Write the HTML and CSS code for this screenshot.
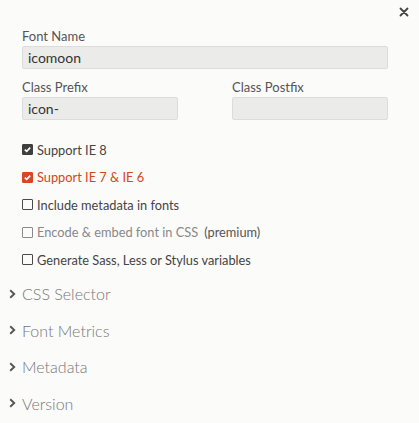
FILE: index.html
```html
<!DOCTYPE html>
<html>
<head>
<meta charset="utf-8">
<link rel="stylesheet" href="styles.css">
</head>
<body>
<div class="panel">
  <button class="close" aria-label="Close">
    <svg width="10" height="10" viewBox="0 0 10 10"><path d="M1.5 1.5L8.5 8.5M8.5 1.5L1.5 8.5" stroke="#444" stroke-width="1.8" stroke-linecap="round"/></svg>
  </button>
  <div class="field">
    <label class="label">Font Name</label>
    <div class="input">icomoon</div>
  </div>
  <div class="row">
    <div class="field half">
      <label class="label">Class Prefix</label>
      <div class="input">icon-</div>
    </div>
    <div class="field half">
      <label class="label">Class Postfix</label>
      <div class="input"></div>
    </div>
  </div>
  <ul class="checks">
    <li class="check on"><span class="box"><svg width="9" height="9" viewBox="0 0 9 9"><path d="M1.8 4.6L3.7 6.4L7.2 2.6" fill="none" stroke="#fff" stroke-width="1.6"/></svg></span>Support IE 8</li>
    <li class="check red"><span class="box"><svg width="9" height="9" viewBox="0 0 9 9"><path d="M1.8 4.6L3.7 6.4L7.2 2.6" fill="none" stroke="#fff" stroke-width="1.6"/></svg></span>Support IE 7 &amp; IE 6</li>
    <li class="check"><span class="box"></span>Include metadata in fonts</li>
    <li class="check dim"><span class="box"></span>Encode &amp; embed font in CSS<span class="prem">(premium)</span></li>
    <li class="check"><span class="box"></span>Generate Sass, Less or Stylus variables</li>
  </ul>
  <div class="sections">
    <div class="section"><span class="chev"><svg width="7" height="10" viewBox="0 0 7 10"><path d="M1.2 1.2L5.2 5L1.2 8.8" fill="none" stroke="#555" stroke-width="1.9"/></svg></span>CSS Selector</div>
    <div class="section"><span class="chev"><svg width="7" height="10" viewBox="0 0 7 10"><path d="M1.2 1.2L5.2 5L1.2 8.8" fill="none" stroke="#555" stroke-width="1.9"/></svg></span>Font Metrics</div>
    <div class="section"><span class="chev"><svg width="7" height="10" viewBox="0 0 7 10"><path d="M1.2 1.2L5.2 5L1.2 8.8" fill="none" stroke="#555" stroke-width="1.9"/></svg></span>Metadata</div>
    <div class="section"><span class="chev"><svg width="7" height="10" viewBox="0 0 7 10"><path d="M1.2 1.2L5.2 5L1.2 8.8" fill="none" stroke="#555" stroke-width="1.9"/></svg></span>Version</div>
  </div>
</div>
</body>
</html>
```
FILE: styles.css
```css
html, body {
  margin: 0;
  padding: 0;
  background: #fbfbfa;
}
body {
  font-family: Lato, "Noto Sans", sans-serif;
  color: #555;
}
.panel {
  position: relative;
  width: 419px;
  height: 423px;
  padding: 27px 31px 0 22px;
  box-sizing: border-box;
}
.close {
  position: absolute;
  top: 7px;
  right: 10px;
  width: 10px;
  height: 10px;
  padding: 0;
  border: 0;
  background: none;
  display: flex;
}
.field {
  display: flex;
  flex-direction: column;
}
.label {
  font-size: 13px;
  line-height: 18px;
  color: #555;
  margin-bottom: 1px;
}
.input {
  height: 23px;
  box-sizing: border-box;
  background: #ebebea;
  border: 1px solid #dcdcdc;
  border-radius: 2px;
  font-size: 14px;
  line-height: 21px;
  color: #333;
  padding: 0 5px;
}
.row {
  display: flex;
  justify-content: space-between;
  margin-top: 9px;
}
.half {
  width: 156px;
}
.checks {
  list-style: none;
  margin: 16px 0 0 0;
  padding: 0;
}
.check {
  display: flex;
  align-items: center;
  height: 27.5px;
  font-size: 12.8px;
  color: #444;
}
.box {
  width: 11px;
  height: 11px;
  box-sizing: border-box;
  border: 1.5px solid #4a4a4a;
  border-radius: 1px;
  margin-right: 4px;
  display: flex;
  align-items: center;
  justify-content: center;
}
.on .box {
  background: #3f3f3f;
  border-color: #3f3f3f;
}
.red {
  color: #d1461e;
}
.red .box {
  background: #dc4523;
  border-color: #dc4523;
}
.dim {
  color: #888;
}
.dim .box {
  border-color: #8a8a8a;
}
.prem {
  color: #555;
  margin-left: 6px;
}
.sections {
  margin-top: 2px;
  margin-left: -14px;
}
.section {
  display: flex;
  align-items: center;
  height: 36.5px;
  font-size: 16px;
  font-weight: 300;
  color: #777;
}
.chev {
  display: flex;
  width: 14px;
  padding-left: 1px;
  box-sizing: border-box;
}
```
